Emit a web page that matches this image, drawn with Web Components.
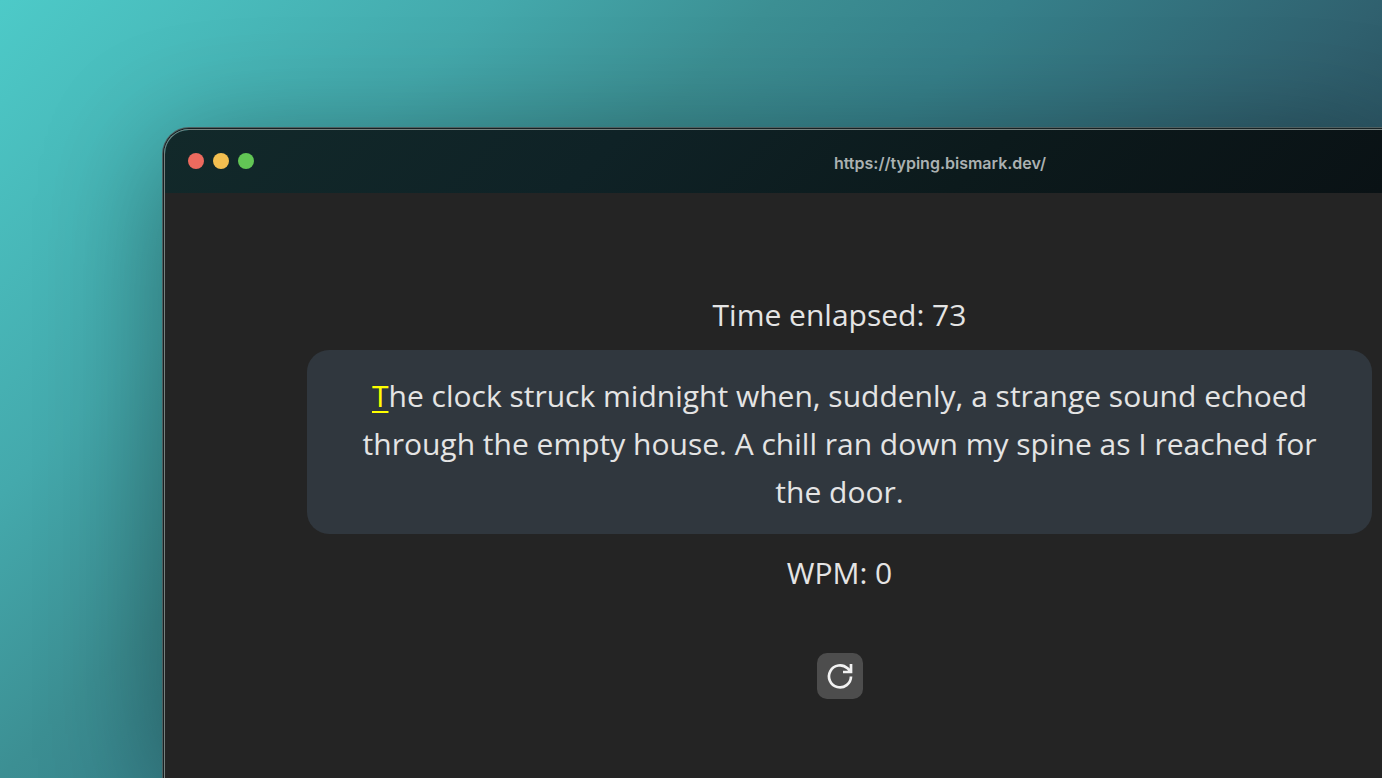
<!DOCTYPE html>
<html lang="en">
<head>
<meta charset="utf-8">
<title>Typing test</title>
<style>
  body {
    margin: 0;
    min-height: 100vh;
    display: flex;
    background: linear-gradient(135deg, #4dcac8 0%, #44a9ac 23%, #3c8f93 36%, #36808a 47%, #30616f 64%, #2a5260 72%, #26454f 100%);
    font-family: "Open Sans", sans-serif;
  }
</style>
</head>
<body>
<browser-window>
  <title-bar slot="bar">https://typing.bismark.dev/</title-bar>
  <typing-test></typing-test>
</browser-window>
<script>
class BrowserWindow extends HTMLElement {
  constructor() {
    super();
    this.attachShadow({ mode: "open" }).innerHTML = `
      <style>
        :host {
          flex: 1;
          min-width: 0;
          display: flex;
          flex-direction: column;
          margin: 129px 0 0 164px;
          border: solid #76817f;
          border-width: 1px 0 0 1px;
          border-radius: 25px 0 0 0;
          box-shadow: 0 0 0 1px #152123, 0 0 0 2px #4e5f60, 0 20px 120px rgba(0, 0, 0, .38);
        }
        .bar { border-radius: 24px 0 0 0; overflow: hidden; }
        main { flex: 1; background: #242424; }
      </style>
      <div class="bar"><slot name="bar"></slot></div>
      <main><slot></slot></main>`;
  }
}
customElements.define("browser-window", BrowserWindow);

class TitleBar extends HTMLElement {
  constructor() {
    super();
    this.attachShadow({ mode: "open" }).innerHTML = `
      <style>
        :host {
          display: grid;
          grid-template-columns: 310px 1fr;
          align-items: center;
          box-sizing: border-box;
          height: 63px;
          padding: 0 0 2px 23px;
          background: linear-gradient(135deg, #12292a 0%, #0f2226 36%, #0c1a1c 66%, #0a1215 100%);
          font: 600 16px/20px Inter, sans-serif;
          color: #abb1b2;
        }
        .lights { display: flex; gap: 9px; }
        i { width: 16px; height: 16px; border-radius: 50%; background: #ec6a5e; }
        i:nth-child(2) { background: #f3bf50; }
        i:nth-child(3) { background: #62c655; }
        .url { padding-top: 4px; text-align: center; }
      </style>
      <div class="lights"><i></i><i></i><i></i></div>
      <div class="url"><slot></slot></div>`;
  }
}
customElements.define("title-bar", TitleBar);

class TypingTest extends HTMLElement {
  constructor() {
    super();
    this.attachShadow({ mode: "open" }).innerHTML = `
      <style>
        :host {
          display: flex;
          flex-direction: column;
          align-items: center;
          padding: 98px 10px 78px 142px;
          font-size: 30px;
          line-height: 48px;
          text-align: center;
          color: #e4e4e4;
        }
        p { margin: 0; }
        .card {
          align-self: stretch;
          margin: 11px 0 15px;
          padding: 22px 32px 18px;
          border-radius: 22px;
          background: #30373e;
        }
        .next { color: #ff0; text-decoration: underline; text-decoration-thickness: 2px; text-underline-offset: 4px; }
        button {
          display: grid;
          place-items: center;
          width: 46px;
          height: 46px;
          margin-top: 56px;
          padding: 0;
          border: 0;
          border-radius: 10px;
          background: #4d4d4d;
          color: #f2f2f2;
        }
        svg { display: block; width: 28px; height: 28px; }
      </style>
      <p>Time enlapsed: 73</p>
      <p class="card"><span class="next">T</span>he clock struck midnight when, suddenly, a strange sound echoed through the empty house. A chill ran down my spine as I reached for the door.</p>
      <p>WPM: 0</p>
      <button type="button" aria-label="Restart">
        <svg viewBox="0 0 28 28" fill="none" stroke="currentColor" stroke-width="2.700" aria-hidden="true">
          <path d="M25 14.500A11 11 0 1 1 21.500 6.300L25 9.500"/><path d="M25 2V10H17"/><path d="M25 5.500V10H20.500Z" fill="currentColor" stroke="none"/>
        </svg>
      </button>`;
  }
}
customElements.define("typing-test", TypingTest);
</script>
</body>
</html>
